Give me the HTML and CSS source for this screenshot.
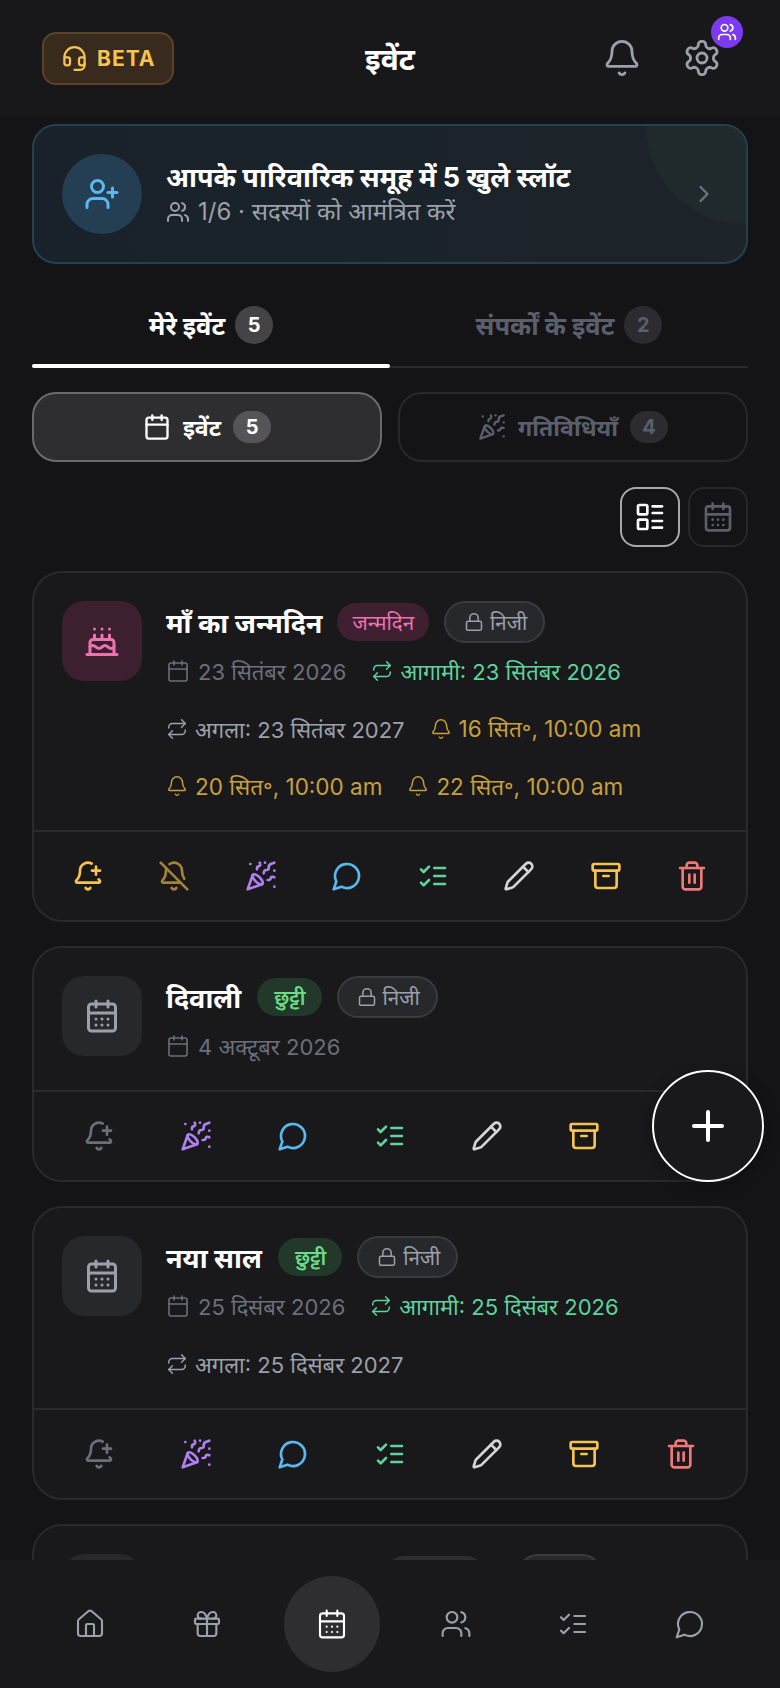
FILE: index.html
```html
<!DOCTYPE html>
<html lang="hi">

<head>
    <meta charset="UTF-8" />
    <title>इवेंट</title>
    <link rel="stylesheet" href="styles.css">
</head>

<body>
    <svg class="sprite" xmlns="http://www.w3.org/2000/svg">
        <symbol id="i-headset" viewBox="0 0 24 24"><path d="M3 11h3a2 2 0 0 1 2 2v3a2 2 0 0 1-2 2H5a2 2 0 0 1-2-2v-5Zm0 0a9 9 0 1 1 18 0m0 0v5a2 2 0 0 1-2 2h-1a2 2 0 0 1-2-2v-3a2 2 0 0 1 2-2h3Z"/><path d="M21 16v2a4 4 0 0 1-4 4h-5"/></symbol>
        <symbol id="i-bell" viewBox="0 0 24 24"><path d="M10.268 21a2 2 0 0 0 3.464 0"/><path d="M3.262 15.326A1 1 0 0 0 4 17h16a1 1 0 0 0 .74-1.673C19.41 13.956 18 12.499 18 8A6 6 0 0 0 6 8c0 4.499-1.411 5.956-2.738 7.326"/></symbol>
        <symbol id="i-settings" viewBox="0 0 24 24"><path d="M12.22 2h-.44a2 2 0 0 0-2 2v.18a2 2 0 0 1-1 1.73l-.43.25a2 2 0 0 1-2 0l-.15-.08a2 2 0 0 0-2.73.73l-.22.38a2 2 0 0 0 .73 2.73l.15.1a2 2 0 0 1 1 1.72v.51a2 2 0 0 1-1 1.74l-.15.09a2 2 0 0 0-.73 2.73l.22.38a2 2 0 0 0 2.73.73l.15-.08a2 2 0 0 1 2 0l.43.25a2 2 0 0 1 1 1.73V20a2 2 0 0 0 2 2h.44a2 2 0 0 0 2-2v-.18a2 2 0 0 1 1-1.73l.43-.25a2 2 0 0 1 2 0l.15.08a2 2 0 0 0 2.73-.73l.22-.39a2 2 0 0 0-.73-2.73l-.15-.08a2 2 0 0 1-1-1.74v-.5a2 2 0 0 1 1-1.74l.15-.09a2 2 0 0 0 .73-2.73l-.22-.38a2 2 0 0 0-2.73-.73l-.15.08a2 2 0 0 1-2 0l-.43-.25a2 2 0 0 1-1-1.73V4a2 2 0 0 0-2-2z"/><circle cx="12" cy="12" r="3"/></symbol>
        <symbol id="i-users" viewBox="0 0 24 24"><path d="M16 21v-2a4 4 0 0 0-4-4H6a4 4 0 0 0-4 4v2"/><path d="M16 3.128a4 4 0 0 1 0 7.744"/><path d="M22 21v-2a4 4 0 0 0-3-3.87"/><circle cx="9" cy="7" r="4"/></symbol>
        <symbol id="i-user-plus" viewBox="0 0 24 24"><path d="M16 21v-2a4 4 0 0 0-4-4H6a4 4 0 0 0-4 4v2"/><circle cx="9" cy="7" r="4"/><path d="M19 8v6"/><path d="M22 11h-6"/></symbol>
        <symbol id="i-chevron" viewBox="0 0 24 24"><path d="m9 18 6-6-6-6"/></symbol>
        <symbol id="i-calendar" viewBox="0 0 24 24"><path d="M8 2v4"/><path d="M16 2v4"/><rect x="3" y="4" width="18" height="18" rx="2"/><path d="M3 10h18"/></symbol>
        <symbol id="i-calendar-days" viewBox="0 0 24 24"><path d="M8 2v4"/><path d="M16 2v4"/><rect x="3" y="4" width="18" height="18" rx="2"/><path d="M3 10h18"/><path d="M8 14h.01"/><path d="M12 14h.01"/><path d="M16 14h.01"/><path d="M8 18h.01"/><path d="M12 18h.01"/><path d="M16 18h.01"/></symbol>
        <symbol id="i-party" viewBox="0 0 24 24"><path d="M5.8 11.3 2 22l10.7-3.79"/><path d="M4 3h.01"/><path d="M22 8h.01"/><path d="M15 2h.01"/><path d="M22 20h.01"/><path d="m22 2-2.24.75a2.9 2.9 0 0 0-1.96 3.12c.1.86-.57 1.63-1.45 1.63h-.38c-.86 0-1.6.6-1.76 1.44L14 10"/><path d="m22 13-.82-.33c-.86-.34-1.82.2-1.98 1.11c-.11.7-.72 1.22-1.43 1.22H17"/><path d="m11 2 .33.82c.34.86-.2 1.82-1.11 1.98C9.52 4.9 9 5.52 9 6.23V7"/><path d="M11 13c1.93 1.93 2.83 4.17 2 5-.83.83-3.07-.07-5-2-1.93-1.93-2.83-4.17-2-5 .83-.83 3.07.07 5 2Z"/></symbol>
        <symbol id="i-list" viewBox="0 0 24 24"><rect x="3" y="3" width="7" height="7" rx="1"/><rect x="3" y="14" width="7" height="7" rx="1"/><path d="M14 4h7"/><path d="M14 9h7"/><path d="M14 15h7"/><path d="M14 20h7"/></symbol>
        <symbol id="i-cake" viewBox="0 0 24 24"><path d="M20 21v-8a2 2 0 0 0-2-2H6a2 2 0 0 0-2 2v8"/><path d="M4 16s.5-1 2-1 2.5 2 4 2 2.5-2 4-2 2.5 2 4 2 2-1 2-1"/><path d="M2 21h20"/><path d="M7 8v3"/><path d="M12 8v3"/><path d="M17 8v3"/><path d="M7 4h.01"/><path d="M12 4h.01"/><path d="M17 4h.01"/></symbol>
        <symbol id="i-repeat" viewBox="0 0 24 24"><path d="m17 2 4 4-4 4"/><path d="M3 11v-1a4 4 0 0 1 4-4h14"/><path d="m7 22-4-4 4-4"/><path d="M21 13v1a4 4 0 0 1-4 4H3"/></symbol>
        <symbol id="i-lock" viewBox="0 0 24 24"><rect x="3" y="11" width="18" height="11" rx="2"/><path d="M7 11V7a5 5 0 0 1 10 0v4"/></symbol>
        <symbol id="i-bell-plus" viewBox="0 0 24 24"><path d="M10.268 21a2 2 0 0 0 3.464 0"/><path d="M15 8h6"/><path d="M18 5v6"/><path d="M20.002 14.464a9 9 0 0 0 .738.863A1 1 0 0 1 20 17H4a1 1 0 0 1-.74-1.673C4.59 13.956 6 12.499 6 8a6 6 0 0 1 8.75-5.332"/></symbol>
        <symbol id="i-bell-off" viewBox="0 0 24 24"><path d="M10.268 21a2 2 0 0 0 3.464 0"/><path d="M17 17H4a1 1 0 0 1-.74-1.673C4.59 13.956 6 12.499 6 8a6 6 0 0 1 .258-1.742"/><path d="m2 2 20 20"/><path d="M8.668 3.01A6 6 0 0 1 18 8c0 2.687.77 4.653 1.707 6.05"/></symbol>
        <symbol id="i-message" viewBox="0 0 24 24"><path d="M7.9 20A9 9 0 1 0 4 16.1L2 22Z"/></symbol>
        <symbol id="i-checks" viewBox="0 0 24 24"><path d="m3 17 2 2 4-4"/><path d="m3 7 2 2 4-4"/><path d="M13 6h8"/><path d="M13 12h8"/><path d="M13 18h8"/></symbol>
        <symbol id="i-pencil" viewBox="0 0 24 24"><path d="M21.174 6.812a1 1 0 0 0-3.986-3.987L3.842 16.174a2 2 0 0 0-.5.83l-1.321 4.352a.5.5 0 0 0 .623.622l4.353-1.32a2 2 0 0 0 .83-.497z"/><path d="m15 5 4 4"/></symbol>
        <symbol id="i-archive" viewBox="0 0 24 24"><rect x="2" y="3" width="20" height="5" rx="1"/><path d="M4 8v11a2 2 0 0 0 2 2h12a2 2 0 0 0 2-2V8"/><path d="M10 12h4"/></symbol>
        <symbol id="i-trash" viewBox="0 0 24 24"><path d="M3 6h18"/><path d="M19 6v14c0 1-1 2-2 2H7c-1 0-2-1-2-2V6"/><path d="M8 6V4c0-1 1-2 2-2h4c1 0 2 1 2 2v2"/><path d="M10 11v6"/><path d="M14 11v6"/></symbol>
        <symbol id="i-plus" viewBox="0 0 24 24"><path d="M5 12h14"/><path d="M12 5v14"/></symbol>
        <symbol id="i-house" viewBox="0 0 24 24"><path d="M15 21v-8a1 1 0 0 0-1-1h-4a1 1 0 0 0-1 1v8"/><path d="M3 10a2 2 0 0 1 .709-1.528l7-5.999a2 2 0 0 1 2.582 0l7 5.999A2 2 0 0 1 21 10v9a2 2 0 0 1-2 2H5a2 2 0 0 1-2-2z"/></symbol>
        <symbol id="i-gift" viewBox="0 0 24 24"><rect x="3" y="8" width="18" height="4" rx="1"/><path d="M12 8v13"/><path d="M19 12v7a2 2 0 0 1-2 2H7a2 2 0 0 1-2-2v-7"/><path d="M7.5 8a2.5 2.5 0 0 1 0-5A4.8 8 0 0 1 12 8a4.8 8 0 0 1 4.5-5 2.5 2.5 0 0 1 0 5"/></symbol>
    </svg>

    <div class="app">
        <header class="topbar">
            <div class="beta"><svg class="icon"><use href="#i-headset"/></svg>BETA</div>
            <h1 class="page-title">इवेंट</h1>
            <div class="top-actions">
                <svg class="icon top-icon"><use href="#i-bell"/></svg>
                <div class="settings">
                    <svg class="icon top-icon"><use href="#i-settings"/></svg>
                    <span class="settings-badge"><svg class="icon"><use href="#i-users"/></svg></span>
                </div>
            </div>
        </header>

        <main class="content">
            <section class="family">
                <span class="family-icon"><svg class="icon"><use href="#i-user-plus"/></svg></span>
                <div class="family-text">
                    <div class="family-title">आपके पारिवारिक समूह में 5 खुले स्लॉट</div>
                    <div class="family-sub"><svg class="icon"><use href="#i-users"/></svg>1/6 · सदस्यों को आमंत्रित करें</div>
                </div>
                <svg class="icon family-chevron"><use href="#i-chevron"/></svg>
            </section>

            <nav class="tabs">
                <div class="tab active">मेरे इवेंट <span class="count">5</span></div>
                <div class="tab">संपर्कों के इवेंट <span class="count">2</span></div>
            </nav>

            <div class="subtabs">
                <div class="subtab active"><svg class="icon"><use href="#i-calendar"/></svg>इवेंट <span class="count">5</span></div>
                <div class="subtab"><svg class="icon"><use href="#i-party"/></svg>गतिविधियाँ <span class="count">4</span></div>
            </div>

            <div class="view-toggle">
                <span class="view-btn active"><svg class="icon"><use href="#i-list"/></svg></span>
                <span class="view-btn"><svg class="icon"><use href="#i-calendar-days"/></svg></span>
            </div>

            <article class="card">
                <div class="card-body">
                    <span class="card-icon pink"><svg class="icon"><use href="#i-cake"/></svg></span>
                    <div class="card-info">
                        <div class="card-head">
                            <h2 class="card-title">माँ का जन्मदिन</h2>
                            <span class="tag tag-birthday">जन्मदिन</span>
                            <span class="tag tag-private"><svg class="icon"><use href="#i-lock"/></svg>निजी</span>
                        </div>
                        <div class="meta">
                            <span class="meta-item date"><svg class="icon"><use href="#i-calendar"/></svg>23 सितंबर 2026</span>
                            <span class="meta-item upcoming"><svg class="icon"><use href="#i-repeat"/></svg>आगामी: 23 सितंबर 2026</span>
                            <span class="meta-item next"><svg class="icon"><use href="#i-repeat"/></svg>अगला: 23 सितंबर 2027</span>
                            <span class="meta-item remind"><svg class="icon"><use href="#i-bell"/></svg>16 सित॰, 10:00 am</span>
                            <span class="meta-item remind"><svg class="icon"><use href="#i-bell"/></svg>20 सित॰, 10:00 am</span>
                            <span class="meta-item remind"><svg class="icon"><use href="#i-bell"/></svg>22 सित॰, 10:00 am</span>
                        </div>
                    </div>
                </div>
                <div class="card-actions">
                    <span class="action c-yellow"><svg class="icon"><use href="#i-bell-plus"/></svg></span>
                    <span class="action c-dim-yellow"><svg class="icon"><use href="#i-bell-off"/></svg></span>
                    <span class="action c-purple"><svg class="icon"><use href="#i-party"/></svg></span>
                    <span class="action c-blue"><svg class="icon"><use href="#i-message"/></svg></span>
                    <span class="action c-green"><svg class="icon"><use href="#i-checks"/></svg></span>
                    <span class="action c-light"><svg class="icon"><use href="#i-pencil"/></svg></span>
                    <span class="action c-yellow"><svg class="icon"><use href="#i-archive"/></svg></span>
                    <span class="action c-red"><svg class="icon"><use href="#i-trash"/></svg></span>
                </div>
            </article>

            <article class="card">
                <div class="card-body">
                    <span class="card-icon"><svg class="icon"><use href="#i-calendar-days"/></svg></span>
                    <div class="card-info">
                        <div class="card-head">
                            <h2 class="card-title">दिवाली</h2>
                            <span class="tag tag-holiday">छुट्टी</span>
                            <span class="tag tag-private"><svg class="icon"><use href="#i-lock"/></svg>निजी</span>
                        </div>
                        <div class="meta">
                            <span class="meta-item date"><svg class="icon"><use href="#i-calendar"/></svg>4 अक्टूबर 2026</span>
                        </div>
                    </div>
                </div>
                <div class="card-actions">
                    <span class="action c-gray"><svg class="icon"><use href="#i-bell-plus"/></svg></span>
                    <span class="action c-purple"><svg class="icon"><use href="#i-party"/></svg></span>
                    <span class="action c-blue"><svg class="icon"><use href="#i-message"/></svg></span>
                    <span class="action c-green"><svg class="icon"><use href="#i-checks"/></svg></span>
                    <span class="action c-light"><svg class="icon"><use href="#i-pencil"/></svg></span>
                    <span class="action c-yellow"><svg class="icon"><use href="#i-archive"/></svg></span>
                    <span class="action c-red"><svg class="icon"><use href="#i-trash"/></svg></span>
                </div>
            </article>

            <article class="card">
                <div class="card-body">
                    <span class="card-icon"><svg class="icon"><use href="#i-calendar-days"/></svg></span>
                    <div class="card-info">
                        <div class="card-head">
                            <h2 class="card-title">नया साल</h2>
                            <span class="tag tag-holiday">छुट्टी</span>
                            <span class="tag tag-private"><svg class="icon"><use href="#i-lock"/></svg>निजी</span>
                        </div>
                        <div class="meta">
                            <span class="meta-item date"><svg class="icon"><use href="#i-calendar"/></svg>25 दिसंबर 2026</span>
                            <span class="meta-item upcoming"><svg class="icon"><use href="#i-repeat"/></svg>आगामी: 25 दिसंबर 2026</span>
                            <span class="meta-item next"><svg class="icon"><use href="#i-repeat"/></svg>अगला: 25 दिसंबर 2027</span>
                        </div>
                    </div>
                </div>
                <div class="card-actions">
                    <span class="action c-gray"><svg class="icon"><use href="#i-bell-plus"/></svg></span>
                    <span class="action c-purple"><svg class="icon"><use href="#i-party"/></svg></span>
                    <span class="action c-blue"><svg class="icon"><use href="#i-message"/></svg></span>
                    <span class="action c-green"><svg class="icon"><use href="#i-checks"/></svg></span>
                    <span class="action c-light"><svg class="icon"><use href="#i-pencil"/></svg></span>
                    <span class="action c-yellow"><svg class="icon"><use href="#i-archive"/></svg></span>
                    <span class="action c-red"><svg class="icon"><use href="#i-trash"/></svg></span>
                </div>
            </article>

            <article class="card">
                <div class="card-body">
                    <span class="card-icon"><svg class="icon"><use href="#i-calendar-days"/></svg></span>
                    <div class="card-info">
                        <div class="card-head">
                            <h2 class="card-title">शादी की सालगिरह</h2>
                            <span class="tag tag-other">सालगिरह</span>
                            <span class="tag tag-private tag-shared">साझा</span>
                        </div>
                    </div>
                </div>
            </article>
        </main>

        <footer class="bottom-nav">
            <span class="nav-item"><svg class="icon"><use href="#i-house"/></svg></span>
            <span class="nav-item"><svg class="icon"><use href="#i-gift"/></svg></span>
            <span class="nav-item active"><svg class="icon"><use href="#i-calendar-days"/></svg></span>
            <span class="nav-item"><svg class="icon"><use href="#i-users"/></svg></span>
            <span class="nav-item"><svg class="icon"><use href="#i-checks"/></svg></span>
            <span class="nav-item"><svg class="icon"><use href="#i-message"/></svg></span>
        </footer>

        <button class="fab"><svg class="icon"><use href="#i-plus"/></svg></button>
    </div>
</body>

</html>
```

FILE: styles.css
```css
* {
    box-sizing: border-box;
    margin: 0;
    padding: 0;
}

body {
    font-family: Inter, "Noto Sans", "Noto Sans Devanagari", sans-serif;
    background-color: #141416;
    color: #ffffff;
    overflow: hidden;
}

.sprite {
    display: none;
}

.icon {
    display: block;
    flex: none;
    width: 24px;
    height: 24px;
    fill: none;
    stroke: currentColor;
    stroke-width: 2;
    stroke-linecap: round;
    stroke-linejoin: round;
}

.app {
    position: relative;
    display: flex;
    flex-direction: column;
    width: 780px;
    height: 1688px;
    overflow: hidden;
}

/* top bar */
.topbar {
    position: relative;
    display: flex;
    align-items: center;
    justify-content: space-between;
    flex: none;
    height: 116px;
    padding: 0 58px 0 42px;
    background-color: #18181a;
}

.beta {
    display: flex;
    align-items: center;
    gap: 9px;
    height: 53px;
    padding: 0 17px;
    font-size: 21px;
    font-weight: 700;
    letter-spacing: 1px;
    color: #f6c350;
    background-color: #392a1e;
    border: 2px solid #5c4126;
    border-radius: 14px;
}

.beta .icon {
    width: 27px;
    height: 27px;
}

.page-title {
    position: absolute;
    left: 0;
    right: 0;
    text-align: center;
    font-size: 30px;
    font-weight: 700;
}

.top-actions {
    display: flex;
    align-items: center;
    gap: 40px;
}

.top-icon {
    width: 40px;
    height: 40px;
    stroke-width: 1.7;
    color: #9ca0aa;
}

.settings {
    position: relative;
}

.settings-badge {
    position: absolute;
    top: -22px;
    right: -21px;
    display: flex;
    align-items: center;
    justify-content: center;
    width: 32px;
    height: 32px;
    border-radius: 50%;
    background-color: #7c3aed;
}

.settings-badge .icon {
    width: 20px;
    height: 20px;
}

.content {
    flex: 1;
    min-height: 0;
    overflow: hidden;
    padding: 8px 32px 0;
}

/* family banner */
.family {
    position: relative;
    display: flex;
    align-items: center;
    height: 140px;
    padding: 0 28px;
    overflow: hidden;
    background: linear-gradient(90deg, #19222a, #1c2429);
    border: 2px solid #25404f;
    border-radius: 24px;
}

.family::after {
    content: "";
    position: absolute;
    top: -98px;
    right: -96px;
    width: 196px;
    height: 196px;
    border-radius: 50%;
    background-color: #20292b;
}

.family-icon {
    display: flex;
    align-items: center;
    justify-content: center;
    flex: none;
    width: 80px;
    height: 80px;
    border-radius: 50%;
    color: #5cb8f0;
    background-color: #243f54;
}

.family-icon .icon {
    width: 36px;
    height: 36px;
}

.family-text {
    flex: 1;
    margin-left: 24px;
}

.family-title {
    font-size: 27px;
    font-weight: 700;
    line-height: 36px;
}

.family-sub {
    display: flex;
    align-items: center;
    gap: 8px;
    font-size: 24px;
    line-height: 32px;
    color: #9ca0aa;
}

.family-chevron {
    position: relative;
    z-index: 1;
    width: 28px;
    height: 28px;
    color: #6b7280;
}

/* tabs */
.tabs {
    display: flex;
    height: 90px;
    margin-top: 14px;
    padding-top: 22px;
    border-bottom: 2px solid #2a2a2e;
}

.tab {
    position: relative;
    display: flex;
    align-items: center;
    justify-content: center;
    gap: 10px;
    flex: 1;
    height: 68px;
    padding-bottom: 18px;
    font-size: 25.5px;
    font-weight: 700;
    color: #5b5f6b;
}

.tab.active {
    color: #ffffff;
}

.tab.active::after {
    content: "";
    position: absolute;
    left: 0;
    right: 0;
    bottom: 0;
    height: 4px;
    border-radius: 2px;
    background-color: #ffffff;
}

.count {
    display: flex;
    align-items: center;
    justify-content: center;
    width: 38px;
    height: 38px;
    font-size: 20px;
    font-weight: 700;
    border-radius: 50%;
    color: #5b5f6b;
    background-color: #2c2c30;
}

.active > .count {
    color: #ffffff;
    background-color: #444447;
}

/* event / activity switch */
.subtabs {
    display: flex;
    gap: 16px;
    margin-top: 24px;
}

.subtab {
    display: flex;
    align-items: center;
    justify-content: center;
    gap: 12px;
    flex: 1;
    height: 70px;
    font-size: 23px;
    font-weight: 700;
    color: #5b5f6b;
    border: 2px solid #28282c;
    border-radius: 24px;
}

.subtab .icon {
    width: 28px;
    height: 28px;
}

.subtab .count {
    width: 38px;
    height: 32px;
    border-radius: 16px;
}

.subtab.active {
    color: #ffffff;
    background-color: #2e2e31;
    border-color: #6b6b6e;
}

.subtab.active .count {
    background-color: #555558;
}

.view-toggle {
    display: flex;
    justify-content: flex-end;
    gap: 8px;
    margin-top: 25px;
}

.view-btn {
    display: flex;
    align-items: center;
    justify-content: center;
    width: 60px;
    height: 60px;
    color: #5b5f6b;
    border: 2px solid #28282c;
    border-radius: 16px;
}

.view-btn .icon {
    width: 32px;
    height: 32px;
}

.view-btn.active {
    color: #ffffff;
    border-color: #a8a8aa;
}

/* event cards */
.card {
    margin-top: 24px;
    background-color: #19191b;
    border: 2px solid #2a2a2d;
    border-radius: 30px;
}

.card-body {
    display: flex;
    gap: 24px;
    padding: 28px;
}

.card-icon {
    display: flex;
    align-items: center;
    justify-content: center;
    flex: none;
    width: 80px;
    height: 80px;
    border-radius: 22px;
    color: #9ca0aa;
    background-color: #27282c;
}

.card-icon .icon {
    width: 36px;
    height: 36px;
}

.card-icon.pink {
    color: #ec72b0;
    background-color: #3c202f;
}

.card-head {
    display: flex;
    align-items: center;
    gap: 15px;
    min-height: 42px;
}

.card-title {
    font-size: 27px;
    font-weight: 700;
}

.tag {
    display: flex;
    align-items: center;
    gap: 6px;
    height: 38px;
    padding: 0 15px;
    font-size: 20.5px;
    border-radius: 19px;
}

.tag .icon {
    width: 20px;
    height: 20px;
    stroke-width: 1.8;
}

.tag-birthday {
    color: #ec72b0;
    background-color: #3f2030;
}

.tag-holiday {
    padding: 0 16px 0 17px;
    margin-left: 1px;
    font-weight: 600;
    color: #6bdc85;
    background-color: #22382a;
}

.tag-other {
    width: 100px;
    margin: 0 17px 0 10px;
    padding: 0;
    justify-content: center;
    color: #9ca0aa;
    background-color: #2e2e31;
}

.tag-private {
    height: 42px;
    padding: 0 16px 0 18px;
    color: #9ca0aa;
    background-color: #27282c;
    border: 2px solid #3a3b40;
    border-radius: 21px;
}

.tag-shared {
    width: 86px;
    padding: 0;
    justify-content: center;
}

.meta {
    display: flex;
    flex-wrap: wrap;
    gap: 25.5px 25px;
    margin-top: 12px;
}

.meta-item {
    display: flex;
    align-items: center;
    gap: 7px;
    height: 32px;
    font-size: 22px;
    white-space: nowrap;
}

.meta-item .icon {
    width: 22px;
    height: 22px;
    stroke-width: 1.6;
}

.date {
    gap: 8px;
    color: #6b6f7b;
}

.date .icon {
    width: 24px;
    height: 24px;
}

.upcoming {
    color: #5fd39b;
}

.next {
    color: #9ca0aa;
}

.remind {
    font-size: 22.5px;
    color: #c8a03c;
}

.card-actions {
    display: flex;
    justify-content: space-evenly;
    align-items: center;
    height: 90px;
    border-top: 2px solid #2a2a2d;
}

.action {
    display: flex;
    justify-content: center;
    width: 64px;
}

.action .icon {
    width: 32px;
    height: 32px;
}

.c-yellow { color: #f6c350; }
.c-dim-yellow { color: #a3833a; }
.c-purple { color: #b07ff0; }
.c-blue { color: #58b8f2; }
.c-green { color: #5fd39b; }
.c-light { color: #d4d4d8; }
.c-red { color: #f07878; }
.c-gray { color: #6b6f7b; }

/* bottom navigation */
.bottom-nav {
    display: flex;
    align-items: center;
    justify-content: space-between;
    flex: none;
    height: 128px;
    padding: 0 50px;
    background-color: #19191b;
}

.nav-item {
    display: flex;
    align-items: center;
    justify-content: center;
    width: 80px;
    height: 96px;
    color: #9ca0aa;
}

.nav-item .icon {
    width: 32px;
    height: 32px;
    stroke-width: 1.6;
}

.nav-item.active {
    width: 96px;
    border-radius: 50%;
    color: #ffffff;
    background-color: #2e2e31;
}

.fab {
    position: absolute;
    left: 652px;
    top: 1070px;
    display: flex;
    align-items: center;
    justify-content: center;
    width: 112px;
    height: 112px;
    color: #ffffff;
    background-color: #19191b;
    border: 2px solid #ffffff;
    border-radius: 50%;
    box-shadow: 0 4px 16px rgba(0, 0, 0, 0.3);
}

.fab .icon {
    width: 48px;
    height: 48px;
}
```
